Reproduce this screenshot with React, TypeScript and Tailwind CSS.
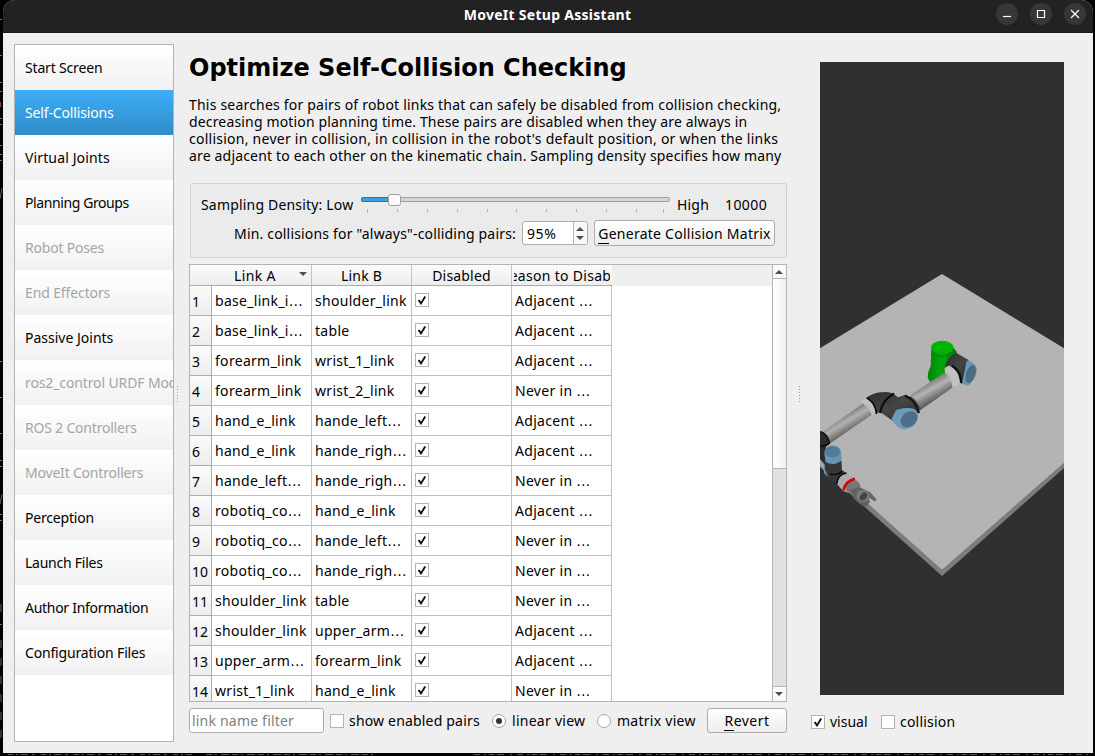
import React from "react";

type NavItem = { label: string; off?: boolean; active?: boolean; t: string };

const nav: NavItem[] = [
  { label: "Start Screen", t: "tracking-[-0.17px]" },
  { label: "Self-Collisions", active: true, t: "tracking-[-0.15px]" },
  { label: "Virtual Joints", t: "tracking-[0.13px]" },
  { label: "Planning Groups", t: "tracking-[-0.4px]" },
  { label: "Robot Poses", off: true, t: "tracking-[-0.2px]" },
  { label: "End Effectors", off: true, t: "tracking-[-0.12px]" },
  { label: "Passive Joints", t: "tracking-[0px]" },
  { label: "ros2_control URDF Modifications", off: true, t: "tracking-[-0.12px]" },
  { label: "ROS 2 Controllers", off: true, t: "tracking-[-0.2px]" },
  { label: "MoveIt Controllers", off: true, t: "tracking-[-0.2px]" },
  { label: "Perception", t: "tracking-[-0.2px]" },
  { label: "Launch Files", t: "tracking-[-0.25px]" },
  { label: "Author Information", t: "tracking-[-0.28px]" },
  { label: "Configuration Files", t: "tracking-[-0.17px]" },
];

const rows: [string, string, string][] = [
  ["base_link_i…", "shoulder_link", "Adjacent …"],
  ["base_link_i…", "table", "Adjacent …"],
  ["forearm_link", "wrist_1_link", "Adjacent …"],
  ["forearm_link", "wrist_2_link", "Never in …"],
  ["hand_e_link", "hande_left…", "Adjacent …"],
  ["hand_e_link", "hande_righ…", "Adjacent …"],
  ["hande_left…", "hande_righ…", "Never in …"],
  ["robotiq_co…", "hand_e_link", "Adjacent …"],
  ["robotiq_co…", "hande_left…", "Never in …"],
  ["robotiq_co…", "hande_righ…", "Never in …"],
  ["shoulder_link", "table", "Never in …"],
  ["shoulder_link", "upper_arm…", "Adjacent …"],
  ["upper_arm…", "forearm_link", "Adjacent …"],
  ["wrist_1_link", "hand_e_link", "Never in …"],
];

function Cell({ text }: { text: string }) {
  const cut = text.endsWith("…");
  return (
    <div className="w-[100px] border-r border-b border-[#c0c0c0] pl-[3px] tracking-[0.3px]">
      {cut ? text.slice(0, -1) : text}
      {cut && <span className="font-['DejaVu_Sans',sans-serif] leading-none">…</span>}
    </div>
  );
}

function Check({ on }: { on?: boolean }) {
  return (
    <span className="flex h-[14px] w-[14px] shrink-0 items-center justify-center border border-[#b4b4b4] bg-white">
      {on && (
        <svg width="10" height="10" viewBox="0 0 10 10">
          <path d="M1.6 5 L4 8.4 L8.2 1.4" fill="none" stroke="#111" strokeWidth="1.9" />
        </svg>
      )}
    </span>
  );
}

function Radio({ on }: { on?: boolean }) {
  return (
    <span className="flex h-[14px] w-[14px] shrink-0 items-center justify-center rounded-full border border-[#a8a8a8] bg-white">
      {on && <span className="h-[6px] w-[6px] rounded-full bg-[#333]" />}
    </span>
  );
}

function Arrow({ up }: { up?: boolean }) {
  return (
    <svg width="8" height="4" viewBox="0 0 8 4" className="shrink-0">
      <path d={up ? "M0 4 L4 0 L8 4Z" : "M0 0 L4 4 L8 0Z"} fill="#4d4d4d" />
    </svg>
  );
}

function Scene() {
  return (
    <svg width="244" height="633" viewBox="820 62 244 633" className="block">
      <defs>
        <linearGradient id="tubeA" gradientUnits="userSpaceOnUse" x1="842" y1="416" x2="851" y2="431">
          <stop offset="0" stopColor="#7c7c7c" />
          <stop offset="0.4" stopColor="#b2b2b2" />
          <stop offset="1" stopColor="#626262" />
        </linearGradient>
        <linearGradient id="tubeB" gradientUnits="userSpaceOnUse" x1="927" y1="383" x2="936" y2="399">
          <stop offset="0" stopColor="#7c7c7c" />
          <stop offset="0.4" stopColor="#b4b4b4" />
          <stop offset="1" stopColor="#626262" />
        </linearGradient>
        <linearGradient id="post" x1="0" y1="0" x2="1" y2="0">
          <stop offset="0" stopColor="#00820a" />
          <stop offset="0.45" stopColor="#00a808" />
          <stop offset="1" stopColor="#007a06" />
        </linearGradient>
        <linearGradient id="joint" x1="0" y1="0" x2="1" y2="1">
          <stop offset="0" stopColor="#2c2c2c" />
          <stop offset="0.5" stopColor="#454545" />
          <stop offset="1" stopColor="#242424" />
        </linearGradient>
      </defs>
      <rect x="820" y="62" width="244" height="633" fill="#303030" />
      <path d="M820 461 L942 570 L1064 463 V468 L942 576 L820 467Z" fill="#7d7d7d" />
      <path d="M820 348.300 L942 274 L1064 348.300 V463 L942 570 L820 461Z" fill="#b4b4b4" />

      <path d="M931.300 348 H953.500 L957 352 L950 368 L942 375 L930 382 Q926 377 929 370 L930.700 366Z" fill="url(#post)" />
      <path d="M931.500 353 Q942 360 953 353" stroke="#007d05" strokeWidth="1" fill="none" />
      <ellipse cx="942.300" cy="347.300" rx="11.300" ry="6.500" fill="#00b404" />

      <path d="M945 367 Q947 356 956.500 353 L968.500 360 L968 374 L962 384 L955 378Z" fill="url(#joint)" />
      <path d="M966.700 360.700 Q974 361 976.700 368 Q977 376 973 380 Q970 386 966 385.500 L962 383Z" fill="#6796b5" />
      <ellipse cx="970.700" cy="374" rx="4.600" ry="9.300" transform="rotate(18 970.700 374)" fill="#4b6c82" />
      <path d="M952 366 Q961 371 961 383" stroke="#0b0b0b" strokeWidth="2.400" fill="none" />
      <path d="M910.700 395 L945 372.500 L954 386.500 L920 410.500Z" fill="url(#tubeB)" />
      <path d="M944.500 368 L949 365.500 Q959 370 960 382 L957 386 L952 387 Q953 376 945 372Z" fill="#c0c0c0" />

      <path d="M866 398 Q874 392 883 392.200 Q892 391.500 898 397.300 L905 395 Q914 397 919 411 L912 422 L893 421 L880 412 L875 414Z" fill="url(#joint)" />
      <path d="M894 393.500 Q882 400 880 413 M905 395.500 Q917 401 919 413" stroke="#0b0b0b" strokeWidth="2" fill="none" />
      <path d="M910 396.500 Q918 402 920 410" stroke="#444" strokeWidth="1.500" fill="none" />
      <path d="M896 410 Q905 407 913 408.500 Q919 411 918 418 Q915 428 905 429.500 Q897 429 891.500 419Z" fill="#6d9cbb" />
      <ellipse cx="909" cy="419.300" rx="9.200" ry="7.200" transform="rotate(-38 909 419.300)" fill="#4c6e86" />

      <path d="M823.300 431.500 L863 403.500 L872 414.500 L830 443.500Z" fill="url(#tubeA)" />
      <path d="M861.700 400.500 L867.500 398.500 Q875 403 876 413 L872 415.500 Q871 406 862 402.500Z" fill="#c0c0c0" />
      <path d="M867 398 Q875.500 403 876.500 414" stroke="#0b0b0b" strokeWidth="1.500" fill="none" />

      <path d="M820 431 Q829 433 829.500 443 L826 447 V476 L820 466Z" fill="#2b2b2b" />
      <path d="M821 431.500 Q829 436 829.500 444 M820 447 Q825 445 829 444" stroke="#0b0b0b" strokeWidth="1.300" fill="none" />
      <path d="M820 459 L825 465 V472 L820 466Z" fill="#a4a4a4" />
      <path d="M825 461 H841.500 L842 470 L847 474 L837 485 L824 476Z" fill="#363636" />
      <path d="M823.500 465 L828 477 L824 473Z" fill="#6796b5" />
      <path d="M830 474 Q838 476 842 471" stroke="#0b0b0b" strokeWidth="1.500" fill="none" />
      <path d="M824.300 453 Q825 445.500 832.700 445.300 Q841 446 841.300 453 L841.700 460 Q835 467 825.500 462Z" fill="#6796b5" />
      <ellipse cx="832.500" cy="451.800" rx="7.500" ry="5.600" fill="#547b95" />

      <path d="M837 484 Q838 474 847 473 L858.500 480.500 L859 488 L849 493 L843 491Z" fill="#adadad" />
      <path d="M836.700 484 Q838 474 846.500 473" stroke="#0b0b0b" strokeWidth="1.500" fill="none" />
      <ellipse cx="853" cy="487" rx="7.500" ry="7" fill="#777" />
      <path d="M843.500 490.500 Q845 481 855 478.700" stroke="#dc0000" strokeWidth="2.600" fill="none" />
      <path d="M850 490 L859 487 L870 492 L876.500 499.500 L875 501.500 L868 497 L870 502 L866 507 L860 504 L854 499Z" fill="#636363" />
      <ellipse cx="863" cy="496" rx="6.500" ry="6" fill="#7b7b7b" />
      <ellipse cx="863.500" cy="496.500" rx="3.200" ry="4.500" transform="rotate(40 863.500 496.500)" fill="#454545" />
    </svg>
  );
}

function Grip() {
  return (
    <div className="flex flex-col gap-[2px]">
      {[0, 1, 2, 3, 4, 5].map((i) => (
        <span key={i} className="h-px w-px bg-[#9a9a9a]" />
      ))}
    </div>
  );
}

const buttonLook = "flex items-center justify-center rounded-[3px] border border-[#acacac] bg-linear-to-b from-white to-[#ededed]";

export default function App() {
  return (
    <div className="h-[756px] w-[1095px] overflow-hidden bg-black font-['Noto_Sans',sans-serif] text-[14px] text-black">
      <div className="flex h-[753px]">
        <svg width="3" height="753" viewBox="0 0 3 753" className="shrink-0">
          <path
            d="M0 19.500h2 M0 55.500h2 M0 82.500h2 M0 91.500h2 M0 118.500h2 M0 124.500h2 M0 145.500h2 M0 154.500h2 M0 160.500h2 M0 361.500h2 M0 397.500h2 M0 433.500h2 M0 460.500h2 M0 466.500h2 M0 514.500h2 M0 520.500h2 M0 624.500h2"
            stroke="#777"
          />
          <path d="M0 102v5" stroke="#8a4c2c" strokeWidth="2" />
          <path d="M0 199L2 188 M0 504L2 494 M1 604v8 M1 640v8 M1 658v8 M1 676v8 M1 694v8 M1 712v8 M1 730v8" stroke="#4a6a80" />
        </svg>
        <div className="flex w-[1090px] flex-col overflow-hidden rounded-t-[12px] bg-[#efefef]">
          <header className="flex h-[33px] shrink-0 items-center border-b border-[#181818] bg-[#222222] pb-[4px]">
            <div className="flex-1" />
            <div className="ml-[6px] text-[14px] font-bold tracking-[0.28px] text-white">MoveIt Setup Assistant</div>
            <div className="flex flex-1 justify-end gap-3 pr-[7px]">
              {["M7 13.500 H15", "M7.500 7.500 H14.500 V14.500 H7.500Z", "M7 7 L15 15 M15 7 L7 15"].map((d) => (
                <span key={d} className="h-[22px] w-[22px] rounded-full bg-[#373737]">
                  <svg width="22" height="22" viewBox="0 0 22 22">
                    <path d={d} fill="none" stroke="#fff" strokeWidth="1.200" />
                  </svg>
                </span>
              ))}
            </div>
          </header>

          <div className="flex flex-1">
            <nav className="mt-[11px] ml-[11px] h-[698px] w-[160px] shrink-0 overflow-hidden border border-[#b4b4b4] bg-white">
              {nav.map((n) => (
                <div
                  key={n.label}
                  className={
                    "flex h-[45px] items-center overflow-hidden pl-[10px] whitespace-nowrap " +
                    n.t +
                    (n.active
                      ? " bg-linear-to-b from-[#3daef9] to-[#308cc6] text-white"
                      : " bg-linear-to-b from-white to-[#f1f1f1] " + (n.off ? "text-[#a5a5a5]" : ""))
                  }
                >
                  {n.label}
                </div>
              ))}
            </nav>
            <div className="flex w-[15px] shrink-0 items-center justify-start pt-px pl-[3px]">
              <Grip />
            </div>

            <main className="flex w-[598px] shrink-0 flex-col tracking-[0.18px]">
              <h1 className="mt-[20px] h-[30px] font-['DejaVu_Sans',sans-serif] text-[24px] leading-[30px] font-bold tracking-normal whitespace-nowrap">
                Optimize Self-Collision Checking
              </h1>
              <div className="mt-[13px] h-[69px] leading-[17px] whitespace-nowrap">
                <p className="tracking-[0.2px]">This searches for pairs of robot links that can safely be disabled from collision checking,</p>
                <p className="tracking-[0.16px]">decreasing motion planning time. These pairs are disabled when they are always in</p>
                <p className="tracking-[0.25px]">collision, never in collision, in collision in the robot's default position, or when the links</p>
                <p className="tracking-[0.17px]">are adjacent to each other on the kinematic chain. Sampling density specifies how many</p>
              </div>

              <section className="mt-[18px] ml-px h-[75px] rounded-[2px] border border-[#d2d2d2] bg-[#ebebeb]">
                <div className="flex h-[34px] items-start pt-[10px] pl-[10px] whitespace-nowrap">
                  <span className="w-[160px] leading-[22px]">Sampling Density: Low</span>
                  <svg width="310" height="24" viewBox="0 0 310 24" className="shrink-0">
                    <rect x="0.500" y="3.500" width="308" height="4" rx="1.500" fill="#d4d4d4" stroke="#a0a0a0" />
                    <rect x="0.500" y="3.500" width="31" height="4" rx="1" fill="#3b9fe0" stroke="#2a74a8" />
                    <path d="M6.500 15v4 M36.500 15v3 M66.500 15v3 M96.500 15v3 M126.500 15v3 M155.500 15v3 M185.500 15v3 M215.500 15v3 M245.500 15v3 M275.500 15v3 M302.500 15v4" stroke="#b2b2b2" />
                    <rect x="27.500" y="0.500" width="12" height="11" rx="2" fill="#fbfbfb" stroke="#a0a0a0" />
                  </svg>
                  <span className="ml-[6px] w-[48px] leading-[22px]">High</span>
                  <span className="leading-[22px] tracking-[0.4px]">10000</span>
                </div>
                <div className="flex h-[30px] items-center pl-[43px] whitespace-nowrap">
                  <span className="w-[288px]">Min. collisions for "always"-colliding pairs:</span>
                  <div className="flex h-[24px] w-[66px] overflow-hidden rounded-[3px] border border-[#acacac] bg-white">
                    <span className="flex-1 pl-1 leading-[23px] tracking-[0.6px]">95%</span>
                    <span className="flex w-[14px] flex-col items-start justify-center gap-[5px] border-l border-[#b4b4b4] bg-[#f8f8f8] pl-[2px]">
                      <Arrow up />
                      <Arrow />
                    </span>
                  </div>
                  <button className={buttonLook + " ml-[6px] h-[26px] w-[181px] tracking-[0.25px]"}>
                    <span><span className="border-b border-black">G</span>enerate Collision Matrix</span>
                  </button>
                </div>
              </section>

              <section className="mt-[6px] flex h-[438px] overflow-hidden border border-[#b4b4b4] bg-white">
                <div className="flex flex-1 flex-col overflow-hidden">
                  <div className="flex h-[21px] shrink-0 bg-[#efefef] leading-[22px]">
                    <div className="flex w-[422px] border-b border-[#acacac] bg-linear-to-b from-[#fbfbfb] to-[#ededed]">
                      <div className="w-[22px]" />
                      <div className="flex w-[100px] items-start border-r border-[#c4c4c4]">
                        <span className="w-[87px] pl-[22px] tracking-[0.35px] whitespace-nowrap">Link A</span>
                        <span className="flex h-[18px] items-center"><Arrow /></span>
                      </div>
                      <div className="w-[100px] border-r border-[#c4c4c4] text-center">Link B</div>
                      <div className="w-[100px] border-r border-[#c4c4c4] text-center">Disabled</div>
                      <div className="flex w-[100px] px-[2px] whitespace-nowrap">
                        <div className="flex flex-1 justify-center overflow-hidden tracking-[0.3px]">
                          <span>Reason to Disable</span>
                        </div>
                      </div>
                    </div>
                  </div>
                  {rows.map((r, i) => (
                    <div key={i} className="flex h-[30px] shrink-0 leading-[29px] whitespace-nowrap">
                      <div className="w-[22px] border-r border-b border-[#acacac] bg-linear-to-b from-[#fbfbfb] to-[#ededed] pt-px pl-[2px] tracking-normal">{i + 1}</div>
                      <Cell text={r[0]} />
                      <Cell text={r[1]} />
                      <div className="w-[100px] border-r border-b border-[#c0c0c0] pt-[7px] pl-[3px]"><Check on /></div>
                      <Cell text={r[2]} />
                    </div>
                  ))}
                </div>
                <div className="flex w-[14px] shrink-0 flex-col border-l border-[#b4b4b4] bg-[#e1e1e1]">
                  <div className="flex h-[14px] items-center border-b border-[#b4b4b4] bg-[#fafafa] pl-[2px]"><Arrow up /></div>
                  <div className="h-[190px] border-b border-[#b4b4b4] bg-linear-to-r from-white to-[#f0f0f0]" />
                  <div className="flex-1" />
                  <div className="flex h-[15px] items-center border-t border-[#b4b4b4] bg-[#fafafa] pl-[2px]"><Arrow /></div>
                </div>
              </section>

              <div className="mt-[6px] flex h-[25px] items-center whitespace-nowrap">
                <div className="h-[25px] w-[135px] rounded-[3px] border border-[#acacac] bg-white pl-[2px] leading-[23px] tracking-[0.2px] text-[#808080]">link name filter</div>
                <span className="ml-[6px] flex w-[162px] items-center gap-[5px]"><Check />show enabled pairs</span>
                <span className="flex w-[105px] items-center gap-[6px] tracking-[0.27px]"><Radio on />linear view</span>
                <span className="flex w-[110px] items-center gap-[6px] tracking-[0.27px]"><Radio />matrix view</span>
                <button className={buttonLook + " h-[25px] w-[80px] tracking-[0.5px]"}>
                  <span><span className="border-b border-black">R</span>evert</span>
                </button>
              </div>
            </main>

            <div className="flex w-[24px] shrink-0 items-center pt-px pl-[12px]">
              <Grip />
            </div>
            <aside className="pt-[29px]">
              <div className="ml-[9px]">
                <Scene />
              </div>
              <div className="mt-[16px] flex items-center whitespace-nowrap">
                <span className="flex w-[70px] items-center gap-[5px]"><Check on />visual</span>
                <span className="flex items-center gap-[5px] tracking-[0.2px]"><Check />collision</span>
              </div>
            </aside>
          </div>
        </div>
      </div>
      <svg width="1095" height="3" viewBox="0 0 1095 3" className="block">
        <path d="M8 1.500H192" stroke="#555" strokeDasharray="5 3 2 3 7 4 3 6" />
        <path d="M206 1.500H376" stroke="#555" strokeDasharray="6 3 2 4 8 3" />
        <path d="M474 1.500H1090" stroke="#555" strokeDasharray="6 4 2 3 5 3 7 6 2 5" />
      </svg>
    </div>
  );
}
